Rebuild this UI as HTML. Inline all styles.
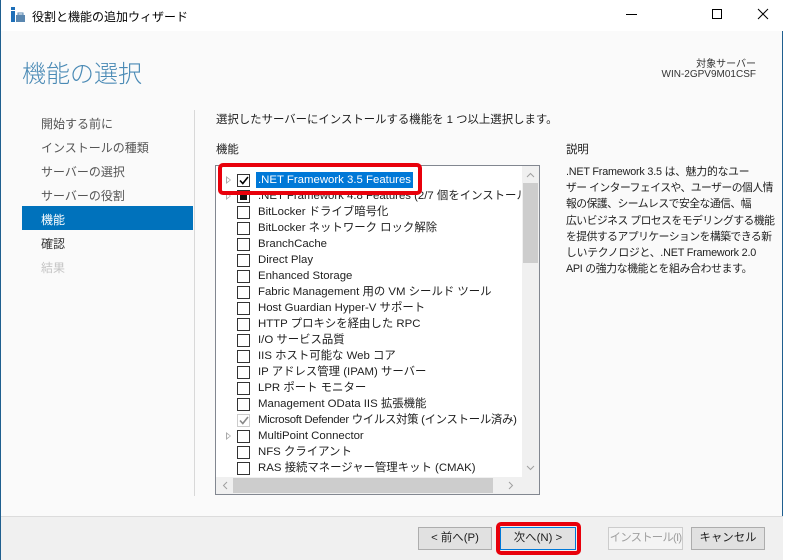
<!DOCTYPE html>
<html><head><meta charset="utf-8"><style>
*{margin:0;padding:0;box-sizing:border-box}
body{width:786px;height:560px;background:#fff;font-family:"Liberation Sans","Noto Sans CJK JP",sans-serif;font-size:11.4px;color:#1e1e1e;position:relative;overflow:hidden}
.a{position:absolute;white-space:nowrap}
.win{position:absolute;left:0;top:0;width:783px;height:560px;border-left:1px solid #1f5f8f;border-right:1px solid #1f5f8f;background:#fafafa}
.tb{position:absolute;left:0;top:0;width:782px;height:31px;background:#fff}
.nav{left:40px;font-size:12px;color:#555}
.row{position:absolute;left:0;height:16px;width:310px;white-space:nowrap}
.cb{position:absolute;left:21px;top:2px;width:13px;height:13px;border:1px solid #333;background:#fff}
.ex{position:absolute;left:10px;top:4px;width:0;height:0;border-left:5px solid #aaa;border-top:4px solid transparent;border-bottom:4px solid transparent}
.ex:after{content:"";position:absolute;left:-4px;top:-2px;border-left:3px solid #fff;border-top:2px solid transparent;border-bottom:2px solid transparent}
.tx{position:absolute;left:42px;top:0;line-height:16px;font-size:11.4px;color:#1e1e1e}
.btn{position:absolute;top:527px;height:23px;border:1px solid #adadad;background:#e1e1e1;text-align:center;line-height:21px;font-size:11.4px;white-space:nowrap}
.desc div{height:16.2px;line-height:16.2px;white-space:nowrap}
</style></head><body>
<div class="win">
<div class="tb"></div>
<svg class="a" style="left:9px;top:7px" width="16" height="16" viewBox="0 0 16 16"><rect x="1" y="0" width="4" height="3" fill="#1e6fb8"/><rect x="1" y="4" width="4" height="11" fill="#1e6fb8"/><rect x="6" y="8" width="9" height="7" fill="#5a87b0"/><rect x="8" y="6" width="5" height="2" fill="none" stroke="#5a87b0"/></svg>
<div class="a" style="left:31px;top:8px;font-size:12px;color:#000">役割と機能の追加ウィザード</div>
<div class="a" style="left:625px;top:14px;width:11px;height:1px;background:#000"></div>
<div class="a" style="left:711px;top:9px;width:10px;height:10px;border:1px solid #000"></div>
<svg class="a" style="left:756px;top:8px" width="12" height="12"><path d="M1 1L11 11M11 1L1 11" stroke="#000" stroke-width="1"/></svg>

<div class="a" style="left:21px;top:54px;font-size:24px;color:#4a8ab5;font-weight:300">機能の選択</div>
<div class="a" style="left:660px;top:55px;width:95px;text-align:right;font-size:10px;color:#333">対象サーバー</div>
<div class="a" style="left:640px;top:69px;width:115px;text-align:right;font-size:10px;color:#333">WIN-2GPV9M01CSF</div>

<div class="a nav" style="top:115px">開始する前に</div>
<div class="a nav" style="top:139px">インストールの種類</div>
<div class="a nav" style="top:163px">サーバーの選択</div>
<div class="a nav" style="top:187px">サーバーの役割</div>
<div class="a" style="left:21px;top:206px;width:171px;height:24px;background:#0072bc"></div>
<div class="a nav" style="top:211px;color:#fff">機能</div>
<div class="a nav" style="top:235px;color:#333">確認</div>
<div class="a nav" style="top:259px;color:#c4c4c4">結果</div>
<div class="a" style="left:193px;top:110px;width:1px;height:386px;background:#d8d8d8"></div>

<div class="a" style="left:215px;top:111px">選択したサーバーにインストールする機能を 1 つ以上選択します。</div>
<div class="a" style="left:215px;top:141px">機能</div>
<div class="a" style="left:565px;top:141px">説明</div>
<div class="a desc" style="left:565px;top:164px;font-size:10.8px;letter-spacing:-0.5px">
<div style="letter-spacing:-0.2px">.NET Framework 3.5 は、魅力的なユー</div>
<div>ザー インターフェイスや、ユーザーの個人情</div>
<div>報の保護、シームレスで安全な通信、幅</div>
<div>広いビジネス プロセスをモデリングする機能</div>
<div>を提供するアプリケーションを構築できる新</div>
<div style="letter-spacing:-0.2px">しいテクノロジと、.NET Framework 2.0</div>
<div style="letter-spacing:-0.3px">API の強力な機能とを組み合わせます。</div>
</div>

<div class="a" style="left:214px;top:165px;width:325px;height:330px;border:1px solid #828790;background:#fff;overflow:hidden">
<div style="position:absolute;left:0;top:0;width:306px;height:311px;overflow:hidden">
<div class="row" style="top:6px"><div class="ex"></div><div class="cb"></div><svg style="position:absolute;left:23px;top:4px" width="10" height="9"><path d="M1 4.5L3.8 7.5L9 1" stroke="#000" stroke-width="1.6" fill="none"/></svg><div class="tx" style="left:40px;background:#0078d7;color:#fff;padding:0 2px">.NET Framework 3.5 Features</div></div>
<div class="row" style="top:22px"><div class="ex"></div><div class="cb"><div style="position:absolute;left:2px;top:2px;width:7px;height:7px;background:#111"></div></div><div class="tx">.NET Framework 4.8 Features (2/7 個をインストール済</div></div>
<div class="row" style="top:38px"><div class="cb"></div><div class="tx">BitLocker ドライブ暗号化</div></div>
<div class="row" style="top:54px"><div class="cb"></div><div class="tx">BitLocker ネットワーク ロック解除</div></div>
<div class="row" style="top:70px"><div class="cb"></div><div class="tx">BranchCache</div></div>
<div class="row" style="top:86px"><div class="cb"></div><div class="tx">Direct Play</div></div>
<div class="row" style="top:102px"><div class="cb"></div><div class="tx">Enhanced Storage</div></div>
<div class="row" style="top:118px"><div class="cb"></div><div class="tx">Fabric Management 用の VM シールド ツール</div></div>
<div class="row" style="top:134px"><div class="cb"></div><div class="tx">Host Guardian Hyper-V サポート</div></div>
<div class="row" style="top:150px"><div class="cb"></div><div class="tx">HTTP プロキシを経由した RPC</div></div>
<div class="row" style="top:166px"><div class="cb"></div><div class="tx">I/O サービス品質</div></div>
<div class="row" style="top:182px"><div class="cb"></div><div class="tx">IIS ホスト可能な Web コア</div></div>
<div class="row" style="top:198px"><div class="cb"></div><div class="tx">IP アドレス管理 (IPAM) サーバー</div></div>
<div class="row" style="top:214px"><div class="cb"></div><div class="tx">LPR ポート モニター</div></div>
<div class="row" style="top:230px"><div class="cb"></div><div class="tx">Management OData IIS 拡張機能</div></div>
<div class="row" style="top:246px"><div class="cb" style="border-color:#ccc"></div><svg style="position:absolute;left:23px;top:4px" width="10" height="9"><path d="M1 4.5L3.8 7.5L9 1" stroke="#888" stroke-width="1.6" fill="none"/></svg><div class="tx" style="letter-spacing:-0.3px">Microsoft Defender ウイルス対策 (インストール済み)</div></div>
<div class="row" style="top:262px"><div class="ex"></div><div class="cb"></div><div class="tx">MultiPoint Connector</div></div>
<div class="row" style="top:278px"><div class="cb"></div><div class="tx">NFS クライアント</div></div>
<div class="row" style="top:294px"><div class="cb"></div><div class="tx">RAS 接続マネージャー管理キット (CMAK)</div></div>
</div>
<div style="position:absolute;left:306px;top:0;width:17px;height:311px;background:#f0f0f0"></div>
<div style="position:absolute;left:307px;top:17px;width:15px;height:80px;background:#cdcdcd"></div>
<svg style="position:absolute;left:310px;top:6px" width="9" height="6"><path d="M1 5L4.5 1.5L8 5" stroke="#a0a0a0" fill="none"/></svg>
<svg style="position:absolute;left:310px;top:299px" width="9" height="6"><path d="M1 1L4.5 4.5L8 1" stroke="#a0a0a0" fill="none"/></svg>
<div style="position:absolute;left:0;top:311px;width:323px;height:17px;background:#f0f0f0"></div>
<div style="position:absolute;left:17px;top:312px;width:260px;height:15px;background:#cdcdcd"></div>
<svg style="position:absolute;left:6px;top:315px" width="6" height="9"><path d="M5 1L1.5 4.5L5 8" stroke="#a0a0a0" fill="none"/></svg>
<svg style="position:absolute;left:292px;top:315px" width="6" height="9"><path d="M1 1L4.5 4.5L1 8" stroke="#a0a0a0" fill="none"/></svg>
</div>

<div class="a" style="left:217px;top:163px;width:204px;height:32px;border:4px solid #e8000b;border-radius:5px"></div>

<div class="a" style="left:0;top:516px;width:782px;height:1px;background:#dcdcdc"></div>
<div class="a" style="left:0;top:517px;width:782px;height:43px;background:#f0f0f0"></div>
<div class="btn" style="left:417px;width:74px">&lt; 前へ(P)</div>
<div class="btn" style="left:499px;width:76px;border-color:#0078d7">次へ(N) &gt;</div>
<div class="a" style="left:495px;top:522px;width:85px;height:33px;border:4px solid #e8000b;border-radius:5px"></div>
<div class="btn" style="left:607px;width:75px;border-color:#ccc;background:#f4f4f4;color:#a0a0a0;letter-spacing:-0.8px">インストール(I)</div>
<div class="btn" style="left:690px;width:74px">キャンセル</div>
</div>
</body></html>
